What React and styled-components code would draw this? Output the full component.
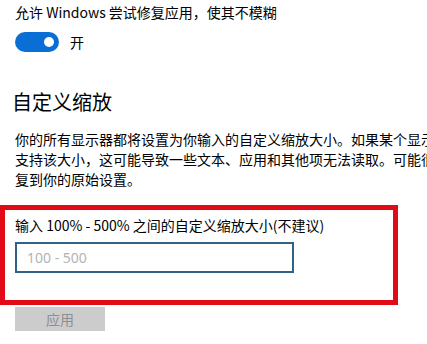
import { useState } from "react";
import styled, { createGlobalStyle } from "styled-components";

const GlobalStyle = createGlobalStyle`
  html, body {
    margin: 0;
    padding: 0;
    background: #fff;
    overflow: hidden;
  }
  body {
    font-family: "Noto Sans CJK SC", "Noto Sans", sans-serif;
    color: #000;
  }
`;

export default function App() {
  const [enabled, setEnabled] = useState(true);
  const [value, setValue] = useState("");

  return (
    <Page>
      <GlobalStyle />
      <Setting>允许 Windows 尝试修复应用，使其不模糊</Setting>
      <ToggleRow>
        <Toggle $on={enabled} onClick={() => setEnabled(!enabled)}>
          <Knob $on={enabled} />
        </Toggle>
        <ToggleLabel>{enabled ? "开" : "关"}</ToggleLabel>
      </ToggleRow>

      <Heading>自定义缩放</Heading>
      <Description>
        你的所有显示器都将设置为你输入的自定义缩放大小。如果某个显示器不支持该大小，这可能导致一些文本、应用和其他项无法读取。可能很难恢复到你的原始设置。
      </Description>

      <Highlight>
        <FieldLabel>输入 100% - 500% 之间的自定义缩放大小(不建议)</FieldLabel>
        <ScaleInput
          type="text"
          placeholder="100 - 500"
          value={value}
          onChange={(e) => setValue(e.target.value)}
        />
      </Highlight>

      <ApplyBtn disabled>应用</ApplyBtn>
    </Page>
  );
}

const Page = styled.div`
  width: 427px;
  height: 344px;
  overflow: hidden;
  padding-top: 2px;
  box-sizing: border-box;
`;

const Setting = styled.div`
  padding-left: 15px;
  font-size: 14px;
  line-height: 20px;
  white-space: nowrap;
`;

const ToggleRow = styled.div`
  display: flex;
  align-items: center;
  margin-top: 10px;
  padding-left: 15px;
  height: 20px;
`;

const Toggle = styled.div`
  width: 44px;
  height: 20px;
  border-radius: 10px;
  background: ${(p) => (p.$on ? "#0a6fd4" : "#fff")};
  border: ${(p) => (p.$on ? "none" : "2px solid #333")};
  box-sizing: border-box;
  display: flex;
  align-items: center;
  justify-content: ${(p) => (p.$on ? "flex-end" : "flex-start")};
  padding: 0 5px;
  cursor: pointer;
`;

const Knob = styled.div`
  width: 10px;
  height: 10px;
  border-radius: 50%;
  background: ${(p) => (p.$on ? "#fff" : "#333")};
`;

const ToggleLabel = styled.span`
  margin-left: 11px;
  font-size: 14px;
  line-height: 20px;
`;

const Heading = styled.h2`
  margin: 36px 0 0;
  padding-left: 12px;
  font-size: 20px;
  font-weight: 400;
  line-height: 28px;
`;

const Description = styled.p`
  margin: 13px 0 0;
  padding-left: 15px;
  width: 450px;
  font-size: 14px;
  line-height: 20px;
`;

const Highlight = styled.div`
  margin-top: 16px;
  width: 398px;
  box-sizing: border-box;
  border: 5px solid #e30a17;
  padding: 5px 0 27px 10px;
`;

const FieldLabel = styled.div`
  font-size: 14px;
  line-height: 20px;
  white-space: nowrap;
`;

const ScaleInput = styled.input`
  display: block;
  margin-top: 7px;
  width: 279px;
  height: 31px;
  box-sizing: border-box;
  border: 2px solid #2f6385;
  padding: 0 10px;
  font-family: "Noto Sans", "Noto Sans CJK SC", sans-serif;
  font-size: 14px;
  outline: none;
  &::placeholder {
    color: #b3b3b3;
  }
`;

const ApplyBtn = styled.button`
  display: block;
  margin: 2px 0 0 15px;
  width: 90px;
  height: 24px;
  border: none;
  background: #cccccc;
  color: #8f8f8f;
  font-family: "Noto Sans CJK SC", sans-serif;
  font-size: 14px;
  padding: 0;
`;
